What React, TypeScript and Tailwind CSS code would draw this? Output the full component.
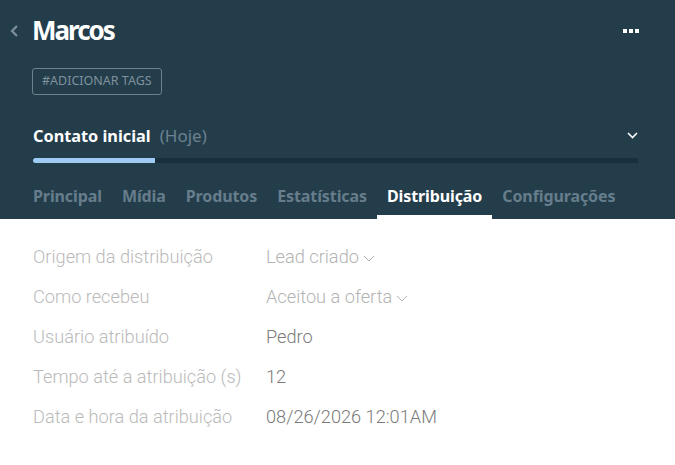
import { ChevronDown } from "lucide-react";

const tabs = ["Principal", "Mídia", "Produtos", "Estatísticas", "Distribuição", "Configurações"];

const rows = [
  { label: "Origem da distribuição", value: "Lead criado", select: true },
  { label: "Como recebeu", value: "Aceitou a oferta", select: true },
  { label: "Usuário atribuído", value: "Pedro", select: false },
  { label: "Tempo até a atribuição (s)", value: "12", select: false },
  { label: "Data e hora da atribuição", value: "08/26/2026 12:01AM", select: false },
];

export default function App() {
  return (
    <div className="w-[675px] h-[465px] bg-white font-['Roboto',sans-serif]">
      {/* Header */}
      <div className="h-[219px] bg-[#233d4b] flex flex-col">
        <div className="flex items-center h-[60px] pl-[10px] pr-[36px]">
          <svg width="9" height="12" viewBox="0 0 9 12" className="mt-[2px]">
            <polyline points="7,1 2,6 7,11" fill="none" stroke="#7f919c" strokeWidth="2.2" />
          </svg>
          <h1 className="ml-[13px] text-white text-[26px] font-bold tracking-[-2px] font-['Noto_Sans',sans-serif]">
            Marcos
          </h1>
          <div className="ml-auto flex gap-[2px] mt-[1px]">
            <span className="w-[4px] h-[4px] bg-white" />
            <span className="w-[4px] h-[4px] bg-white" />
            <span className="w-[4px] h-[4px] bg-white" />
          </div>
        </div>

        <div className="px-[32px] mt-[8px]">
          <button className="h-[27px] px-[9px] border border-[#6d818d] rounded-[3px] text-[#7f919c] text-[12.5px] font-['Noto_Sans',sans-serif]">
            #ADICIONAR TAGS
          </button>
        </div>

        <div className="pl-[33px] pr-[37px] mt-[28px] flex items-center">
          <span className="text-white text-[16.3px] font-bold font-['Noto_Sans',sans-serif]">
            Contato inicial
          </span>
          <span className="ml-[9px] text-[#6c8190] text-[17px] font-['Noto_Sans',sans-serif]">(Hoje)</span>
          <svg width="11" height="7" viewBox="0 0 11 7" className="ml-auto">
            <polyline points="1,1 5.5,5.5 10,1" fill="none" stroke="#ffffff" strokeWidth="1.6" />
          </svg>
        </div>

        <div className="ml-[33px] mr-[37px] mt-[9px] h-[5px] bg-[#18303d] rounded-l-full">
          <div className="h-full w-[122px] bg-[#9dcbf3] rounded-l-full" />
        </div>

        <div className="mt-auto flex px-[23px]">
          {tabs.map((t) => {
            const active = t === "Distribuição";
            return (
              <div
                key={t}
                className={
                  "px-[10px] pb-[7px] text-[16px] font-bold font-['Noto_Sans',sans-serif] tracking-[-0.1px] border-b-[4px] " +
                  (active ? "text-white border-white" : "text-[#677d8b] border-transparent")
                }
              >
                {t}
              </div>
            );
          })}
        </div>
      </div>

      {/* Distribution rows */}
      <div className="pt-[18px] px-[33px] flex flex-col">
        {rows.map((r) => (
          <div key={r.label} className="h-[40px] flex items-center text-[18.2px] font-light">
            <span className="w-[233px] text-[#bababa]">{r.label}</span>
            <span className={"flex items-center " + (r.select ? "text-[#b3b3b3]" : "text-[#7a7a7a]")}>
              {r.value}
              {r.select && (
                <svg width="12" height="7" viewBox="0 0 12 7" className="ml-[4px] mt-[3px]">
                  <polyline points="1,1 6,6 11,1" fill="none" stroke="#b3b3b3" strokeWidth="1" />
                </svg>
              )}
            </span>
          </div>
        ))}
      </div>
    </div>
  );
}
